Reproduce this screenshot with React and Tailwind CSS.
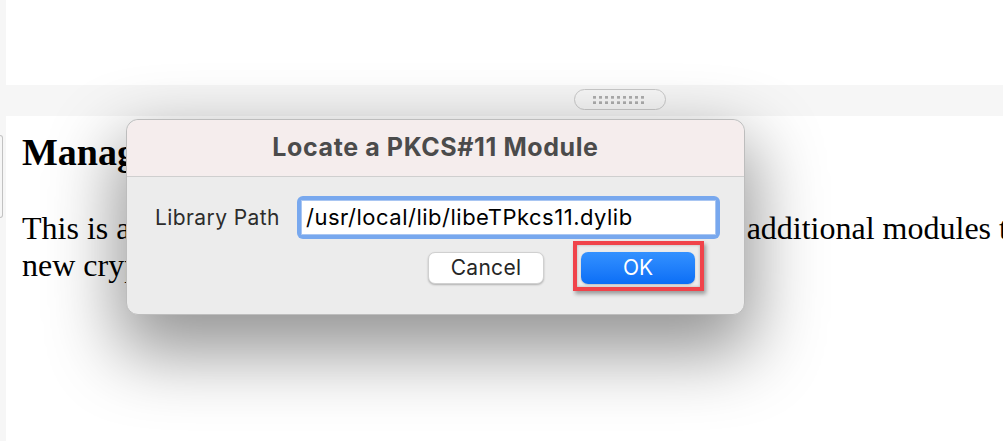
export default function App() {
  const dots = [];
  for (let r = 0; r < 2; r++) {
    for (let c = 0; c < 9; c++) {
      dots.push(<rect key={r + "-" + c} x={c * 6} y={r * 5.3} width="3" height="2.7" fill="#aeaeae" />);
    }
  }
  return (
    <div className="relative w-[1003px] h-[441px] overflow-hidden bg-[#f6f6f6] flex flex-col">
      {/* top pane */}
      <div className="ml-[6px] h-[85px] bg-white shrink-0" />
      {/* splitter */}
      <div className="h-[31px] shrink-0 flex items-start">
        <div className="ml-[574px] mt-[4px] w-[92px] h-[21px] rounded-full border-[1.5px] border-[#c9c9c9] bg-[#f7f7f7] flex items-center justify-center">
          <svg width="54" height="8" viewBox="0 0 54 8">{dots}</svg>
        </div>
      </div>
      {/* bottom pane */}
      <div className="flex flex-1">
        <div className="w-[6px] shrink-0">
          <div className="mt-[19px] w-[3px] h-[83px] border-r border-y border-[#c2c2c2] rounded-r-[4px]" />
        </div>
        <div className="flex-1 bg-white pl-[16px] text-black" style={{ fontFamily: '"Liberation Serif", "Times New Roman", serif' }}>
          <div className="mt-[15px] text-[38px] leading-[42px] font-bold whitespace-nowrap">Manage Devices</div>
          <div className="mt-[37px] text-[32px] leading-[37px] whitespace-nowrap">
            This is a list of the security devices loaded. We can load additional modules to support
            <br />
            new cryptographic devices.
          </div>
        </div>
      </div>

      {/* dialog */}
      <div
        className="absolute left-[126px] top-[119px] w-[619px] h-[196px] rounded-[12px] border border-[#bdbdbd] bg-[#ececec] shadow-[0_30px_70px_8px_rgba(0,0,0,0.42)] flex flex-col"
        style={{ fontFamily: 'Inter, "Noto Sans", sans-serif' }}
      >
        <div className="h-[57px] shrink-0 rounded-t-[12px] bg-[#f5eded] border-b border-[#cfcfcf] flex items-center justify-center">
          <span className="text-[25px] font-bold text-[#4b4b4b] tracking-[0.6px]">Locate a PKCS#11 Module</span>
        </div>
        <div className="flex items-center mt-[19px] pl-[28px]">
          <span className="w-[142px] text-[21px] tracking-[0.4px] text-[#2c2c2c]">Library Path</span>
          <div className="w-[423px] h-[43px] rounded-[6px] bg-[#78a8ee] p-[4px]">
            <div className="w-full h-full bg-white border border-[#a9c6f2] flex items-center pl-[4px] text-[22px] tracking-[0.5px] text-black">
              /usr/local/lib/libeTPkcs11.dylib
            </div>
          </div>
        </div>
        <div className="flex justify-end mt-[13px] pr-[49px] gap-[37px]">
          <button className="w-[116px] h-[32px] rounded-[7px] bg-white shadow-[0_1px_2px_rgba(0,0,0,0.25)] border-[0.5px] border-[#d0d0d0] text-[21px] tracking-[0.3px] text-[#262626] flex items-center justify-center">
            Cancel
          </button>
          <div className="relative">
            <button className="w-[114px] h-[32px] rounded-[7px] bg-gradient-to-b from-[#3391ff] to-[#0a6ef6] text-white text-[21px] flex items-center justify-center shadow-[0_1px_2px_rgba(0,0,0,0.2)]">
              OK
            </button>
            <div className="absolute -left-[8px] -top-[11px] w-[131px] h-[50px] border-[4px] border-[#f0434a] shadow-[2px_3px_4px_rgba(0,0,0,0.35),inset_0_0_3px_rgba(0,0,0,0.25)] pointer-events-none" />
          </div>
        </div>
      </div>
    </div>
  );
}
